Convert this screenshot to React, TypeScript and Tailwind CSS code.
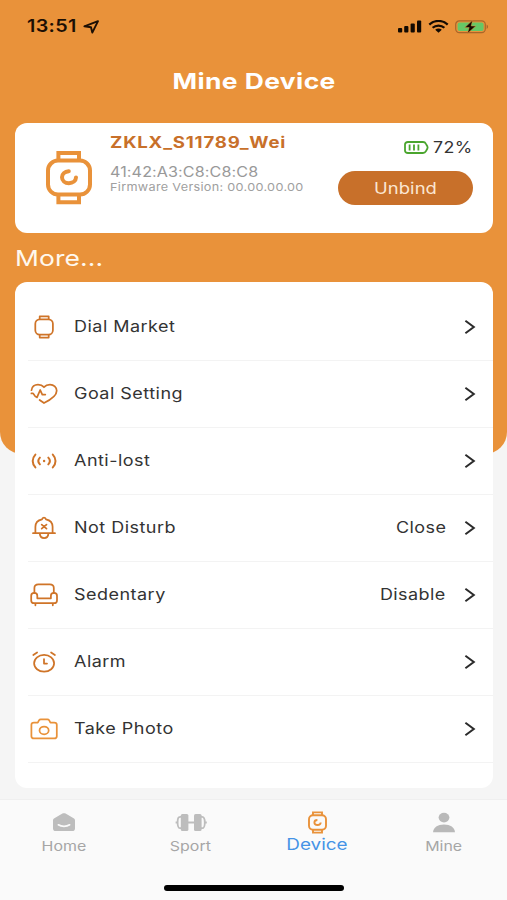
import type { ReactNode } from "react";
import clsx from "clsx";

type MenuItem = {
  label: string;
  icon: ReactNode;
  value?: string;
};

type TabItem = {
  label: string;
  icon: ReactNode;
  active?: boolean;
};

// The type is wider than Inter's own proportions, so every label is stretched on x.
function Wide({ className, children }: { className?: string; children: ReactNode }) {
  return <span className={clsx("inline-block whitespace-nowrap", className)}>{children}</span>;
}

function LocationIcon() {
  return (
    <svg width="17" height="14" viewBox="0 0 17 14" fill="none">
      <path d="M1.4 6.3 15 1.2 9.3 12.6 8 7.2Z" stroke="#1c0f04" strokeWidth="1.9" strokeLinejoin="round" />
    </svg>
  );
}

function SignalIcon() {
  return (
    <svg width="24" height="13" viewBox="0 0 24 13" fill="#120a02">
      <rect x="0" y="8" width="4.2" height="4.4" rx="1" />
      <rect x="6.2" y="6" width="4.2" height="6.4" rx="1" />
      <rect x="12.6" y="3.4" width="4.2" height="9" rx="1" />
      <rect x="19" y="0.6" width="4.2" height="11.8" rx="1" />
    </svg>
  );
}

function WifiIcon() {
  return (
    <svg width="21" height="13" viewBox="0 0 21 13" fill="none" stroke="#120a02" strokeWidth="2.2">
      <path d="M1.3 4.6C6.4-.3 14.6-.3 19.7 4.6" />
      <path d="M4.6 7.8c3.3-3 8.5-3 11.8 0" />
      <path d="M7.2 9.7c1.9-1.5 4.7-1.5 6.6 0L10.5 12.7Z" fill="#120a02" stroke="none" />
    </svg>
  );
}

function ChargingIcon() {
  return (
    <svg width="34" height="14" viewBox="0 0 34 14">
      <rect x="0.7" y="0.9" width="29.6" height="11.8" rx="3.6" fill="none" stroke="#a9662a" strokeWidth="1.2" />
      <path d="M31.6 4.6c2 .8 2 3.6 0 4.4Z" fill="#a9662a" />
      <rect x="2.6" y="2.6" width="26" height="8.4" rx="2" fill="#66c766" />
      <path d="M17.6.2 9.8 7.6h4.4L12.4 13.4 20.8 6h-4.6Z" fill="#120a02" stroke="#e9923a" strokeWidth="0.5" />
    </svg>
  );
}

function DeviceIcon() {
  return (
    <svg width="46" height="56" viewBox="0 0 46 56" fill="none" stroke="#e9923a" strokeWidth="4">
      <rect x="2" y="10.6" width="42" height="34" rx="10" />
      <path d="M12.4 10V3H33v7M12.4 45v7.2H33V45" />
      <path d="M22.8 21.2c-4.2.4-6.8 3-6.8 6 0 3.400 2.900 6 6.900 6s7-2.600 7.100-5.800" strokeLinecap="round" />
    </svg>
  );
}

function DeviceTabIcon() {
  return (
    <svg width="19" height="23" viewBox="0 0 19 23" fill="none" stroke="#e9923a" strokeWidth="1.9">
      <rect x="1" y="4.3" width="17" height="14.4" rx="4" />
      <path d="M5 4.2V1.4h9v2.8M5 18.8v2.8h9v-2.8" />
      <path d="M9.4 9c-2 0-3 1.200-3 2.500s1.300 2.500 3.100 2.500 3.100-1.100 3.200-2.500" />
    </svg>
  );
}

function BatteryIcon() {
  return (
    <svg width="25" height="13" viewBox="0 0 25 13" fill="none" stroke="#4aa52e" strokeWidth="1.8">
      <path d="M4 1h15c1.500 0 2.300.6 2.800 1.600l1.500 2.600c.4.800.4 1.800 0 2.600l-1.500 2.600c-.5 1-1.300 1.600-2.800 1.600H4c-2 0-3-.9-3-2.600V3.600C1 1.900 2 1 4 1Z" />
      <path d="M5.600 3.600v5.800M10 3.600v5.800M14.400 3.600v5.800" />
    </svg>
  );
}

const line = {
  fill: "none",
  stroke: "#cf7428",
  strokeWidth: 1.75,
  strokeLinecap: "round",
  strokeLinejoin: "round",
} as const;

function DialIcon() {
  return (
    <svg width="28" height="24" viewBox="0 0 28 24" {...line}>
      <rect x="5.300" y="4.400" width="17.600" height="15.200" rx="4.400" />
      <path d="M9.700 4.200V1.400h9v2.800M9.700 19.800v2.800h9v-2.800" />
    </svg>
  );
}

function HeartIcon() {
  return (
    <svg width="28" height="24" viewBox="0 0 28 24" {...line}>
      <path d="M1.500 8.200C1.800 4.600 4.700 2.600 8 2.600c2.500 0 4.600 1 6 2.600 1.400-1.600 3.500-2.600 6-2.600 3.800 0 6.700 2.600 6.700 6.200 0 4.800-5.600 8.800-12.700 12.200L9.600 18" />
      <path d="M1.400 11.400H3c1 0 1.200 3.200 4 4L10.200 8l2.100 4.600h3" />
    </svg>
  );
}

function AntiLostIcon() {
  return (
    <svg width="28" height="24" viewBox="0 0 28 24" {...line}>
      <path d="M5.400 5.600c-3.600 3.800-3.600 9 0 12.800M22.800 5.600c3.600 3.800 3.600 9 0 12.800M9.900 8.600c-2 2.100-2 4.700 0 6.800M18.300 8.600c2 2.100 2 4.700 0 6.800" strokeWidth="2" />
      <circle cx="14.100" cy="12" r="1.200" fill="#cf7428" stroke="none" />
    </svg>
  );
}

function BellIcon() {
  return (
    <svg width="28" height="24" viewBox="0 0 28 24" {...line}>
      <path d="M3 17.200h22M5.400 17V10.800c0-4.300 2.800-6.700 6.600-7.500.2-1.200 1-1.800 2-1.800s1.800.6 2 1.800c3.800.8 6.600 3.200 6.600 7.500V17M9.800 17.600c.2 2.600 2 4.400 4.300 4.400s4.100-1.800 4.300-4.400" />
      <path d="m11.700 8.600 4.800 4M16.500 8.600l-4.800 4" />
    </svg>
  );
}

function SofaIcon() {
  return (
    <svg width="28" height="24" viewBox="0 0 28 24" {...line}>
      <path d="M4.400 10V5c0-2.600 1.200-3.700 4-3.700h11.400c2.800 0 4 1.100 4 3.700v5" />
      <path d="M7.300 15.300v-2.600c0-1.700-1.200-2.800-3-2.800s-3.100 1.100-3.100 2.800v4.700c0 1.800 1 2.800 3 2.800h19.800c2 0 3-1 3-2.800v-4.700c0-1.700-1.300-2.800-3.100-2.800s-3 1.100-3 2.800v2.600ZM5.400 20.400v1.900M22.800 20.400v1.900" />
    </svg>
  );
}

function AlarmIcon() {
  return (
    <svg width="28" height="24" viewBox="0 0 28 24" {...line}>
      <ellipse cx="14.100" cy="13.300" rx="10" ry="8.400" />
      <path d="M14 9v4.500h3M3.300 5l3.800-2.500M24.900 5l-3.800-2.500" />
    </svg>
  );
}

function CameraIcon() {
  return (
    <svg width="28" height="24" viewBox="0 0 28 24" {...line} stroke="#e9923a">
      <path d="M4 5.600h3.800l1.300-2.400c.4-.6.8-.9 1.600-.9h6.800c.8 0 1.200.3 1.600.9l1.300 2.400h3.800c1.700 0 2.600.8 2.600 2.200v11.400c0 1.400-.9 2.200-2.600 2.200H4c-1.700 0-2.600-.8-2.600-2.200V7.800c0-1.400.9-2.200 2.600-2.200Z" />
      <ellipse cx="14.100" cy="13.400" rx="4.600" ry="3.900" />
    </svg>
  );
}

function ChevronIcon() {
  return (
    <svg width="12" height="16" viewBox="0 0 12 16" fill="none" stroke="#2b2b2b" strokeWidth="2">
      <path d="M1.400 1.800 9.800 8l-8.400 6.200" />
    </svg>
  );
}

function HomeIcon() {
  return (
    <svg width="24" height="20" viewBox="0 0 24 20">
      <path d="M10.400 1.600c1-.6 2.200-.6 3.200 0l7.600 4.400c1.200.7 1.800 1.400 1.800 2.600v7.800c0 1.700-1 2.600-2.800 2.600H3.800C2 19 1 18.100 1 16.400V8.600C1 7.400 1.600 6.700 2.800 6Z" fill="#bdbdbd" />
      <path d="M6.400 12.800c3 2 8.200 2 11.200 0" stroke="#fafafa" strokeWidth="1.700" fill="none" strokeLinecap="round" />
    </svg>
  );
}

function SportIcon() {
  return (
    <svg width="32" height="19" viewBox="0 0 32 19" fill="#bdbdbd">
      <rect x="5.800" y="1" width="7.600" height="17" rx="1.600" />
      <rect x="19" y="1" width="7.600" height="17" rx="1.600" />
      <path d="M7 3.800H5.200C3.200 3.800 2.600 5.600 2.600 9.500s.6 5.700 2.600 5.700H7M25.400 3.800h1.800c2 0 2.600 1.800 2.600 5.700s-.6 5.700-2.600 5.700h-1.800M13 9.500h6M.6 9.500h2M29.800 9.500h2" fill="none" stroke="#bdbdbd" strokeWidth="1.800" />
    </svg>
  );
}

function MineIcon() {
  return (
    <svg width="24" height="21" viewBox="0 0 24 21" fill="#b9b9b9">
      <ellipse cx="12" cy="5.600" rx="5.400" ry="4.800" />
      <path d="M1 20.200C1.400 15.200 5.600 12.400 12 12.400s10.600 2.800 11 7.800Z" />
    </svg>
  );
}

const menu: MenuItem[] = [
  { label: "Dial Market", icon: <DialIcon /> },
  { label: "Goal Setting", icon: <HeartIcon /> },
  { label: "Anti-lost", icon: <AntiLostIcon /> },
  { label: "Not Disturb", icon: <BellIcon />, value: "Close" },
  { label: "Sedentary", icon: <SofaIcon />, value: "Disable" },
  { label: "Alarm", icon: <AlarmIcon /> },
  { label: "Take Photo", icon: <CameraIcon /> },
];

const tabs: TabItem[] = [
  { label: "Home", icon: <HomeIcon /> },
  { label: "Sport", icon: <SportIcon /> },
  { label: "Device", icon: <DeviceTabIcon />, active: true },
  { label: "Mine", icon: <MineIcon /> },
];

function MenuRow({ item }: { item: MenuItem }) {
  return (
    <li className="flex h-[67px] items-center border-b border-[#f3f3f3] pr-[17px]">
      <span className="w-[46px] shrink-0 pb-px pl-[2px]">{item.icon}</span>
      <Wide className="origin-left scale-x-[1.16] tracking-[0.42px]">{item.label}</Wide>
      <span className="ml-auto flex items-center gap-[18px]">
        {item.value && <Wide className="origin-right scale-x-[1.16] tracking-[0.35px]">{item.value}</Wide>}
        <span className="pb-px"><ChevronIcon /></span>
      </span>
    </li>
  );
}

export default function App() {
  return (
    <div className="relative flex h-[900px] w-[507px] flex-col overflow-hidden bg-[#f5f5f5] font-['Inter',sans-serif] text-[#333]">
      <div className="absolute inset-x-0 top-0 h-[454px] rounded-b-[22px] bg-[#e9923a]" />

      <header className="relative">
        <div className="flex h-[53px] items-center pr-[18px] pl-[27px] text-[#1c0f04]">
          <Wide className="w-[56px] origin-left scale-x-[1.16] pt-px text-[17px] font-semibold tracking-[0.3px]">13:51</Wide>
          <LocationIcon />
          <div className="ml-auto flex items-center">
            <SignalIcon />
            <span className="ml-[6px]"><WifiIcon /></span>
            <span className="ml-[6px]"><ChargingIcon /></span>
          </div>
        </div>
        <h1 className="flex h-[55px] items-center justify-center pt-px pl-px text-[22px] font-bold text-white">
          <Wide className="origin-center scale-x-[1.2] tracking-[0.35px]">Mine Device</Wide>
        </h1>
      </header>

      <section className="relative mr-[14px] ml-[14.5px] mt-[15px] flex h-[110px] shrink-0 rounded-xl bg-white">
        <div className="mt-[27px] ml-[31px] w-[64px] shrink-0"><DeviceIcon /></div>
        <div className="flex flex-col items-start">
          <Wide className="mt-[10px] origin-left scale-x-[1.2] text-[15.5px] leading-5 font-bold tracking-[0.66px] text-[#c8702a]">ZKLX_S11789_Wei</Wide>
          <Wide className="mt-[10px] origin-left scale-x-[1.15] text-[14px] leading-[18px] tracking-[0.1px] text-[#999]">41:42:A3:C8:C8:C8</Wide>
          <Wide className="-mt-px origin-left scale-x-[1.15] text-[11px] leading-[14px] tracking-[0.27px] text-[#a0a0a0]">Firmware Version: 00.00.00.00</Wide>
        </div>
        <div className="mr-5 ml-auto flex w-[135px] shrink-0 flex-col">
          <div className="mt-[14px] flex h-5 items-center pl-[66px]">
            <BatteryIcon />
            <Wide className="ml-1 origin-left scale-x-[1.15] pt-px text-[15.5px] tracking-[0.3px]">72%</Wide>
          </div>
          <button className="mt-[14px] h-[34px] rounded-full bg-[#c8702a] text-[16px] text-[#fbe6d2]">
            <Wide className="origin-center scale-x-[1.15] tracking-[0.1px]">Unbind</Wide>
          </button>
        </div>
      </section>

      <h2 className="relative ml-[15px] flex h-[49px] shrink-0 items-center pt-px text-[22px] text-[#fff8ee]">
        <Wide className="origin-left scale-x-[1.2] tracking-[0.1px]">More...</Wide>
      </h2>

      <ul className="relative mr-[14px] ml-[14.5px] h-[506px] shrink-0 rounded-xl bg-white pt-[12px] pl-[13.5px] text-[15.5px]">
        {menu.map((item) => <MenuRow key={item.label} item={item} />)}
      </ul>

      <nav className="relative mt-[11px] flex-1 border-t border-[#efefef] bg-[#fafafa]">
        <ul className="grid grid-cols-4 pl-px">
          {tabs.map((tab) => (
            <li key={tab.label} className={clsx("flex flex-col items-center", tab.active ? "text-[#4593e6]" : "text-[#a6a6a6]")}>
              <span className="flex h-[44px] items-center">{tab.icon}</span>
              <span className={clsx("flex h-[10px] items-center", tab.active ? "-mt-[5px] mb-px text-[16px]" : "-mt-[3px] text-[13.5px]")}>
                <Wide className="origin-center scale-x-[1.18]">{tab.label}</Wide>
              </span>
            </li>
          ))}
        </ul>
        <div className="mt-[34px] ml-[164px] h-[6px] w-[180px] rounded-full bg-black" />
      </nav>
    </div>
  );
}
